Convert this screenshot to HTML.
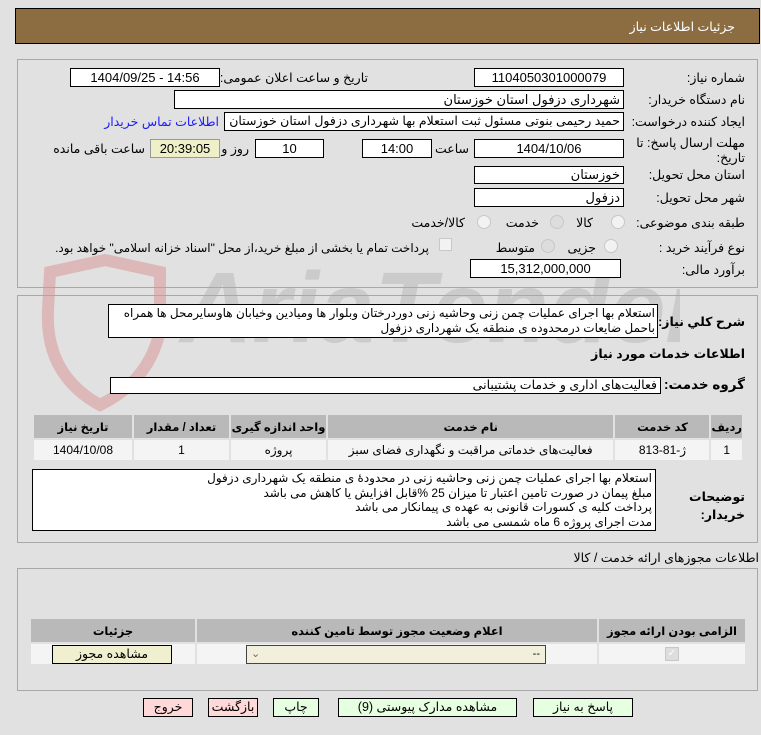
<!DOCTYPE html>
<html><head><meta charset="utf-8">
<style>
body{margin:0;width:761px;height:735px;background:#e1e1e1;font-family:"Liberation Sans","DejaVu Sans",sans-serif;font-size:12px;color:#000;position:relative;overflow:hidden}
.a{position:absolute}
.box{position:absolute;background:#fff;border:1px solid #000;box-sizing:border-box;height:19px;line-height:17px;text-align:center;font-size:13px;white-space:nowrap;overflow:hidden}
.l{position:absolute;direction:rtl;text-align:right;font-size:12.5px;white-space:nowrap}
.panel{position:absolute;border:1px solid #a8a8a8;box-sizing:border-box}
.rad{position:absolute;width:12px;height:12px;border-radius:50%;border:1px solid #c8c8c8;background:#f2f2f2}
.btn{position:absolute;height:19px;border:1px solid #000;box-sizing:border-box;text-align:center;line-height:17px;font-size:12.5px;background:#e6ffe0}
table{border-collapse:separate;border-spacing:2px;position:absolute;direction:rtl}
th{background:#b9b9b9;font-weight:bold;font-size:11.5px;height:23px;padding:0;white-space:nowrap}
td{background:#f4f4f4;text-align:center;font-size:12px;height:20px;padding:0;white-space:nowrap}
</style></head><body>
<div class="a" style="left:15px;top:8px;width:745px;height:36px;background:#8c6d41;border:1px solid #000;box-sizing:border-box"></div>
<div class="l" style="right:26px;top:19px;color:#fff;font-size:12.5px">جزئیات اطلاعات نیاز</div>

<svg class="a" style="left:20px;top:250px" width="660" height="170">
<path d="M30 22 L85 10 L140 22 L140 80 Q130 130 80 155 Q25 125 28 60 Z" fill="none" stroke="#dcb8b8" stroke-width="12"/>
<text x="160" y="92" font-family="Liberation Sans" font-weight="bold" font-style="italic" font-size="100" fill="#cbcbcb" transform="scale(1,1)">AriaTender.net</text>
</svg>

<div class="panel" style="left:17px;top:59px;width:741px;height:229px"></div>
<div class="l" style="right:16px;top:70px">شماره نیاز:</div>
<div class="box" style="left:474px;top:68px;width:150px">1104050301000079</div>
<div class="l" style="right:393px;top:70px">تاریخ و ساعت اعلان عمومی:</div>
<div class="box" style="left:70px;top:68px;width:150px">1404/09/25 - 14:56</div>
<div class="l" style="right:16px;top:92px">نام دستگاه خریدار:</div>
<div class="box" style="left:174px;top:90px;width:450px;text-align:right;padding-right:3px">شهرداری دزفول استان خوزستان</div>
<div class="l" style="right:16px;top:114px">ایجاد کننده درخواست:</div>
<div class="box" style="left:224px;top:112px;width:400px;text-align:right;padding-right:3px;direction:rtl;font-size:12.5px">حمید رحیمی بنوتی مسئول ثبت استعلام بها  شهرداری دزفول استان خوزستان</div>
<div class="l" style="right:542px;top:114px;color:#1a1aff">اطلاعات تماس خریدار</div>
<div class="l" style="right:16px;top:136px;line-height:15px">مهلت ارسال پاسخ: تا<br>تاریخ:</div>
<div class="box" style="left:474px;top:139px;width:150px">1404/10/06</div>
<div class="l" style="right:292px;top:141px">ساعت</div>
<div class="box" style="left:362px;top:139px;width:70px">14:00</div>
<div class="box" style="left:255px;top:139px;width:69px">10</div>
<div class="l" style="right:512px;top:141px">روز و</div>
<div class="box" style="left:150px;top:139px;width:70px;background:#f0f0c8;border-color:#999">20:39:05</div>
<div class="l" style="right:616px;top:141px">ساعت باقی مانده</div>
<div class="l" style="right:16px;top:167px">استان محل تحویل:</div>
<div class="box" style="left:474px;top:166px;width:150px;height:18px;line-height:16px;text-align:right;padding-right:3px">خوزستان</div>
<div class="l" style="right:16px;top:190px">شهر محل تحویل:</div>
<div class="box" style="left:474px;top:188px;width:150px;text-align:right;padding-right:3px">دزفول</div>
<div class="l" style="right:16px;top:215px">طبقه بندی موضوعی:</div>
<div class="rad" style="left:611px;top:215px"></div><div class="l" style="right:168px;top:215px">کالا</div>
<div class="rad" style="left:550px;top:215px;background:#ddd"></div><div class="l" style="right:222px;top:215px">خدمت</div>
<div class="rad" style="left:477px;top:215px"></div><div class="l" style="right:296px;top:215px">کالا/خدمت</div>
<div class="l" style="right:16px;top:240px">نوع فرآیند خرید :</div>
<div class="rad" style="left:604px;top:239px"></div><div class="l" style="right:165px;top:240px">جزیی</div>
<div class="rad" style="left:541px;top:239px;background:#ddd"></div><div class="l" style="right:226px;top:240px">متوسط</div>
<div class="a" style="left:439px;top:238px;width:11px;height:11px;border:1px solid #c8c8c8;background:#f2f2f2"></div>
<div class="l" style="right:332px;top:241px;font-size:12px">پرداخت تمام یا بخشی از مبلغ خرید،از محل "اسناد خزانه اسلامی" خواهد بود.</div>
<div class="l" style="right:16px;top:262px">برآورد مالی:</div>
<div class="box" style="left:470px;top:259px;width:151px">15,312,000,000</div>

<div class="panel" style="left:17px;top:295px;width:741px;height:248px"></div>
<div class="l" style="right:16px;top:314px;font-weight:bold">شرح کلي نياز:</div>
<div class="a" style="left:108px;top:304px;width:550px;height:34px;background:#fff;border:1px solid #000;box-sizing:border-box;direction:rtl;text-align:right;font-size:12px;line-height:15px;padding:1px 2px;white-space:nowrap;overflow:hidden">استعلام بها اجرای عملیات چمن زنی وحاشیه زنی دوردرختان وبلوار ها ومیادین وخیابان هاوسایرمحل ها همراه<br>باحمل ضایعات درمحدوده ی منطقه یک شهرداری دزفول</div>
<div class="l" style="right:16px;top:346px;font-weight:bold">اطلاعات خدمات مورد نیاز</div>
<div class="l" style="right:16px;top:377px;font-weight:bold;font-size:13.5px">گروه خدمت:</div>
<div class="box" style="left:110px;top:377px;width:551px;height:17px;text-align:right;padding-right:3px;line-height:15px;font-size:12.5px">فعالیت‌های اداری و خدمات پشتیبانی</div>

<table style="left:32px;top:413px;width:712px">
<tr><th style="width:27px">ردیف</th><th style="width:94px">کد خدمت</th><th>نام خدمت</th><th style="width:95px">واحد اندازه گیری</th><th style="width:95px">تعداد / مقدار</th><th style="width:98px">تاریخ نیاز</th></tr>
<tr><td>1</td><td>ژ-81-813</td><td>فعالیت‌های خدماتی مراقبت و نگهداری فضای سبز</td><td>پروژه</td><td>1</td><td>1404/10/08</td></tr>
</table>
<div class="a" style="left:32px;top:469px;width:624px;height:62px;background:#fff;border:1px solid #000;box-sizing:border-box;direction:rtl;text-align:right;font-size:12px;line-height:14.5px;padding:1px 3px;white-space:nowrap">استعلام بها اجرای عملیات چمن زنی وحاشیه زنی در محدودۀ ی منطقه یک شهرداری دزفول<br>مبلغ پیمان در صورت تامین اعتبار تا میزان 25 %قابل افزایش یا کاهش می باشد<br>پرداخت کلیه ی کسورات قانونی به عهده ی پیمانکار می باشد<br>مدت اجرای پروژه 6 ماه شمسی می باشد</div>
<div class="l" style="right:16px;top:488px;font-weight:bold;line-height:18px">توضیحات<br>خریدار:</div>

<div class="l" style="right:2px;top:550px">اطلاعات مجوزهای ارائه خدمت / کالا</div>
<div class="panel" style="left:17px;top:568px;width:741px;height:123px"></div>
<table style="left:29px;top:617px;width:718px">
<tr><th style="width:146px">الزامی بودن ارائه مجوز</th><th style="width:400px">اعلام وضعیت مجوز توسط تامین کننده</th><th>جزئیات</th></tr>
<tr><td></td><td></td><td></td></tr>
</table>
<div class="a" style="left:665px;top:647px;width:12px;height:12px;background:#ddd;border:1px solid #c8c8c8;color:#fff;font-size:10px;line-height:12px;text-align:center">✓</div>
<div class="a" style="left:246px;top:645px;width:300px;height:19px;background:#f2f0dc;border:1px solid #444;box-sizing:border-box;font-size:11px;line-height:17px"><span style="position:absolute;left:4px;color:#666">⌄</span><span style="position:absolute;right:5px">--</span></div>
<div class="btn" style="left:52px;top:645px;width:120px;background:#f0f0d0">مشاهده مجوز</div>

<div class="btn" style="left:533px;top:698px;width:100px">پاسخ به نیاز</div>
<div class="btn" style="left:338px;top:698px;width:179px">مشاهده مدارک پیوستی (9)</div>
<div class="btn" style="left:273px;top:698px;width:46px">چاپ</div>
<div class="btn" style="left:208px;top:698px;width:50px;background:#ffd8d8">بازگشت</div>
<div class="btn" style="left:143px;top:698px;width:50px;background:#ffd8d8">خروج</div>
</body></html>
